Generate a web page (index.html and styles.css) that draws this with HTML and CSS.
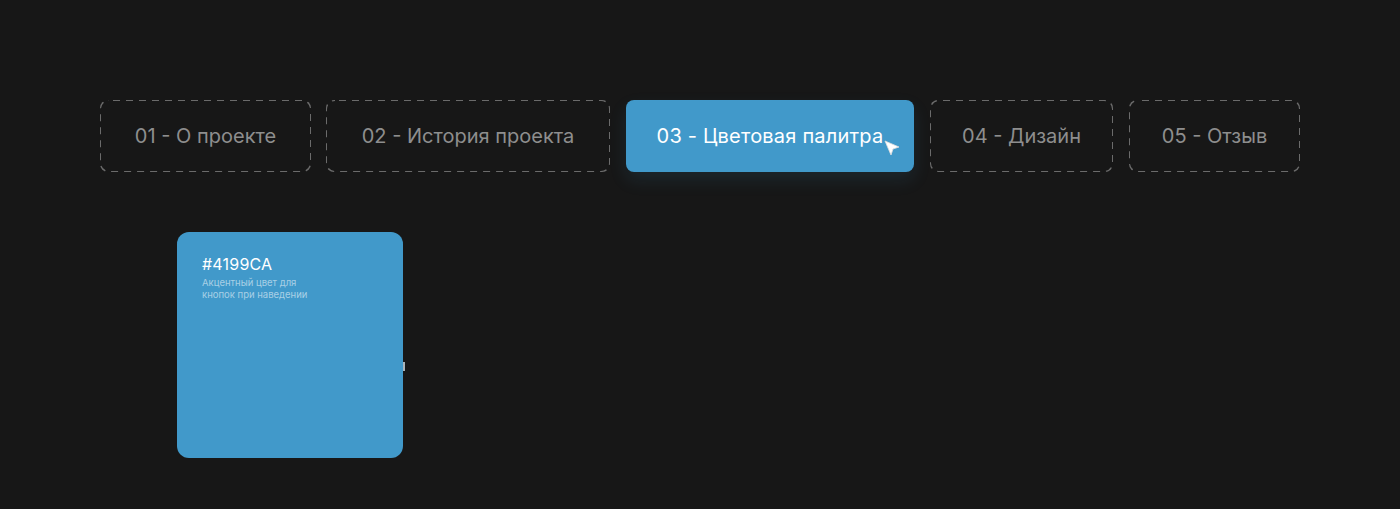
FILE: index.html
```html
<!DOCTYPE html>
<html lang="ru">
<head>
<meta charset="utf-8">
<title>Палитра</title>
<link rel="stylesheet" href="styles.css">
</head>
<body>
<main class="page">
  <nav class="tabs">
    <div class="tab">01 - О проекте</div>
    <div class="tab">02 - История проекта</div>
    <div class="tab tab--active">03 - Цветовая палитра
      <svg class="cursor" width="18" height="18" viewBox="0 0 18 18"><path d="M2 2 L16 8 L10 10 L8 16 Z" fill="#fff" stroke="#ddd" stroke-width="0.8" stroke-linejoin="round"/></svg>
    </div>
    <div class="tab">04 - Дизайн</div>
    <div class="tab">05 - Отзыв</div>
  </nav>
  <section class="palette">
    <div class="swatch">
      <div class="swatch__hex">#4199CA</div>
      <div class="swatch__desc">Акцентный цвет для<br>кнопок при наведении</div>
      <span class="swatch__mark"></span>
    </div>
  </section>
</main>
</body>
</html>
```
FILE: styles.css
```css
html, body {
  margin: 0;
  padding: 0;
  background: #171717;
  font-family: Inter, "Noto Sans", sans-serif;
}
.page {
  width: 1400px;
  height: 509px;
  padding-top: 100px;
  box-sizing: border-box;
}
.tabs {
  display: grid;
  grid-template-columns: 210px 284px 288px 183px 171px;
  column-gap: 16px;
  width: 1200px;
  margin-left: 100px;
}
.tabs .tab:first-child { margin-right: -1px; }
.tab {
  position: relative;
  height: 72px;
  display: flex;
  align-items: center;
  justify-content: center;
  font-size: 20px;
  letter-spacing: 0;
  color: #8e8e8e;
  border-radius: 8px;
  background-image: url("data:image/svg+xml,%3Csvg xmlns='http://www.w3.org/2000/svg'%3E%3Crect x='0' y='0' width='100%25' height='100%25' rx='9' ry='9' fill='none' stroke='%236b6b6b' stroke-width='2' stroke-dasharray='7 6' stroke-dashoffset='-4'/%3E%3C/svg%3E");
}
.tab--active {
  background: #4199ca;
  color: #ffffff;
  letter-spacing: 0.2px;
  box-shadow: 0 8px 18px rgba(65, 153, 202, 0.12);
}
.cursor {
  position: absolute;
  left: 257px;
  top: 39px;
}
.palette {
  padding: 60px 0 0 177px;
}
.swatch {
  position: relative;
  width: 226px;
  height: 226px;
  background: #4199ca;
  border-radius: 12px;
  box-sizing: border-box;
  padding: 23px 25px;
  color: #fff;
}
.swatch__hex {
  font-size: 16px;
  line-height: 18px;
  letter-spacing: 0.2px;
}
.swatch__desc {
  margin-top: 4px;
  font-size: 9.5px;
  line-height: 12px;
  color: rgba(255, 255, 255, 0.55);
}
.swatch__mark {
  position: absolute;
  right: -2px;
  top: 130px;
  width: 2px;
  height: 9px;
  background: #aab4ba;
}
```
